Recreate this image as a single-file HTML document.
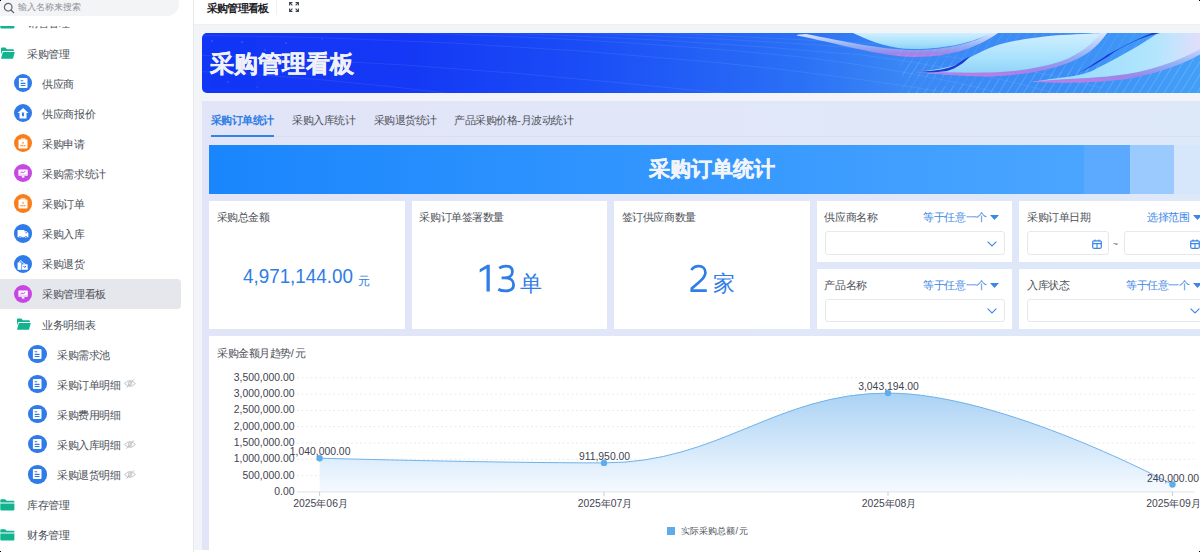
<!DOCTYPE html>
<html><head><meta charset="utf-8">
<style>
*{box-sizing:border-box;margin:0;padding:0}
html,body{width:1200px;height:552px;overflow:hidden;background:#fff;font-family:"Liberation Sans",sans-serif;}
.a{position:absolute;white-space:nowrap}
.it{position:absolute;left:0;width:181px;height:30px;font-size:11px;letter-spacing:-0.45px;color:#4b5058;white-space:nowrap}
.it .t{position:absolute;top:8.7px;line-height:14px}
.ic{position:absolute;width:18.2px;height:18.2px;border-radius:50%;top:5.9px}
.ic svg{position:absolute;left:0;top:0}
.fold{position:absolute;left:0;top:9px}
.card{position:absolute;background:#fff}
.ctl{position:absolute;left:7.8px;top:9px;font-size:11px;letter-spacing:-0.45px;line-height:14px;color:#4e5259}
.inp{position:absolute;border:1px solid #e6e8ec;border-radius:3px;background:#fff}
.lnk{position:absolute;font-size:11px;letter-spacing:-0.45px;text-align:right;line-height:14px;color:#3b86e6}
</style></head><body>

<div class="a" style="left:0;top:0;width:194px;height:552px;background:#fff;overflow:hidden">
<div class="a" style="left:-20px;top:-8px;width:198.6px;height:23.8px;border-radius:12px;background:#f3f4f6"></div>
<svg class="a" style="left:3px;top:1.5px" width="12" height="12" viewBox="0 0 12 12"><circle cx="5.2" cy="5.2" r="3.8" fill="none" stroke="#5c6068" stroke-width="1.2"/><path d="M8 8 L10.6 10.6" stroke="#5c6068" stroke-width="1.3" stroke-linecap="round"/></svg>
<div class="a" style="left:18px;top:0px;font-size:9.4px;line-height:13px;color:#8d9198">输入名称来搜索</div>
<div class="a" style="left:0;top:25.5px;width:194px;height:527px;overflow:hidden">
<div class="a" style="left:0;top:-25.5px;width:194px;height:600px">
<div class="it" style="top:7.8px;">
<svg class="fold" style="left:0px" width="15" height="12" viewBox="0 0 15 12"><path d="M0.3 1.3 Q0.3 0.3 1.3 0.3 L5.2 0.3 L6.6 1.7 L13.4 1.7 Q14.4 1.7 14.4 2.7 L14.4 3.6 L0.3 3.6 Z" fill="#12b48f"/><path d="M0.3 4.5 L14.4 4.5 L14.4 10.6 Q14.4 11.6 13.4 11.6 L1.3 11.6 Q0.3 11.6 0.3 10.6 Z" fill="#12b48f"/></svg>
<div class="t" style="left:27.0px">销售管理</div>
</div>
<div class="it" style="top:37.9px;">
<svg class="fold" style="left:0.0px" width="15" height="12" viewBox="0 0 15 12"><path d="M1 1.6 Q1 0.6 2 0.6 L5.4 0.6 L6.8 2.2 L12.9 2.2 Q13.9 2.2 13.9 3.2 L13.9 4.1 L2.9 4.1 Q2.3 4.1 2 4.8 L1 7.6 Z" fill="#12b48f"/><path d="M2.9 5 L14.8 5 L13.1 11.3 Q12.9 11.8 12.3 11.8 L1.6 11.8 Q1 11.8 1.1 11.2 Z" fill="#12b48f"/></svg>
<div class="t" style="left:27.0px">采购管理</div>
</div>
<div class="it" style="top:68.0px;">
<div class="ic" style="left:13.5px;background:#2f7ce8"><svg width="18" height="18" viewBox="0 0 18 18"><rect x="4.9" y="4.1" width="8.6" height="9.9" rx="0.9" fill="#fff"/><rect x="6.6" y="6" width="2.6" height="1.3" fill="#2f7ce8" opacity=".75"/><rect x="6.6" y="8.8" width="5" height="1.1" rx=".5" fill="#2f7ce8"/><rect x="6.6" y="11" width="5" height="1.1" rx=".5" fill="#2f7ce8"/></svg></div>
<div class="t" style="left:42.4px">供应商</div>
</div>
<div class="it" style="top:98.1px;">
<div class="ic" style="left:13.5px;background:#2f7ce8"><svg width="18" height="18" viewBox="0 0 18 18"><path d="M9.2 4 L14.4 8.9 L12.5 8.9 L12.5 14.6 L5.5 14.6 L5.5 8.9 L3.6 8.9 Z" fill="#fff"/><ellipse cx="9" cy="10.6" rx="1.1" ry="2" fill="#2f7ce8"/><path d="M7.9 8.2 L8.6 9 M10.1 8.2 L9.4 9" stroke="#2f7ce8" stroke-width=".6"/></svg></div>
<div class="t" style="left:42.4px">供应商报价</div>
</div>
<div class="it" style="top:128.2px;">
<div class="ic" style="left:13.5px;background:#fa7d19"><svg width="18" height="18" viewBox="0 0 18 18"><rect x="4.5" y="5.4" width="9" height="9" rx="0.6" fill="#fff"/><path d="M7 4.2 L11.2 4.2 L11.6 5.8 L6.6 5.8Z" fill="#fff" opacity=".85"/><path d="M9 7.2 L10.2 9.6 L7.8 9.6Z" fill="#fa7d19" opacity=".8"/><circle cx="7" cy="11.8" r=".75" fill="#fa7d19"/><circle cx="8.9" cy="11.8" r=".75" fill="#fa7d19"/><circle cx="10.8" cy="11.8" r=".75" fill="#fa7d19"/></svg></div>
<div class="t" style="left:42.4px">采购申请</div>
</div>
<div class="it" style="top:158.4px;">
<div class="ic" style="left:13.5px;background:#c647e3"><svg width="18" height="18" viewBox="0 0 18 18"><rect x="4.4" y="5.6" width="9.4" height="6.2" rx="0.4" fill="#fff"/><rect x="7.8" y="11.8" width="2.6" height="1.8" fill="#fff"/><path d="M6.4 9.2 L8 7.9 L9.3 8.7 L11.4 7.2" stroke="#c647e3" stroke-width="1" fill="none"/><rect x="4.4" y="10.6" width="9.4" height=".5" fill="#c647e3" opacity=".5"/></svg></div>
<div class="t" style="left:42.4px">采购需求统计</div>
</div>
<div class="it" style="top:188.5px;">
<div class="ic" style="left:13.5px;background:#fa7d19"><svg width="18" height="18" viewBox="0 0 18 18"><rect x="4.5" y="5.4" width="9" height="9" rx="0.6" fill="#fff"/><path d="M7 4.2 L11.2 4.2 L11.6 5.8 L6.6 5.8Z" fill="#fff" opacity=".85"/><path d="M9 7.2 L10.2 9.6 L7.8 9.6Z" fill="#fa7d19" opacity=".8"/><circle cx="7" cy="11.8" r=".75" fill="#fa7d19"/><circle cx="8.9" cy="11.8" r=".75" fill="#fa7d19"/><circle cx="10.8" cy="11.8" r=".75" fill="#fa7d19"/></svg></div>
<div class="t" style="left:42.4px">采购订单</div>
</div>
<div class="it" style="top:218.6px;">
<div class="ic" style="left:13.5px;background:#2f7ce8"><svg width="18" height="18" viewBox="0 0 18 18"><path d="M3.6 6.4 Q3.6 6.1 3.9 6.1 L10.4 6.1 L10.4 7.3 L12.6 7.3 L14.4 9.2 L14.4 13.2 L3.6 13.2Z" fill="#fff"/><circle cx="6.2" cy="13.2" r="1.2" fill="#2f7ce8"/><circle cx="11.8" cy="13.2" r="1.2" fill="#2f7ce8"/><circle cx="6.2" cy="13.2" r=".6" fill="#fff"/><circle cx="11.8" cy="13.2" r=".6" fill="#fff"/><circle cx="12.1" cy="8.7" r=".7" fill="#2f7ce8"/></svg></div>
<div class="t" style="left:42.4px">采购入库</div>
</div>
<div class="it" style="top:248.7px;">
<div class="ic" style="left:13.5px;background:#2f7ce8"><svg width="18" height="18" viewBox="0 0 18 18"><path d="M3.6 7.4 L5.2 7.4 L7.4 7.4 L7.4 14.8 L3.6 14.8Z" fill="#fff"/><path d="M5.4 7.4 Q5.6 5.6 6.6 5.6 Q7.8 5.8 8.4 7.6 L11.6 9.4" stroke="#fff" stroke-width=".9" fill="none"/><path d="M8.2 9.2 L13.6 9.2 L13.8 14.8 L8 14.8Z" fill="#fff"/><path d="M9.6 11 L10.7 12.6 L11.8 11" stroke="#2f7ce8" stroke-width="1" fill="none"/></svg></div>
<div class="t" style="left:42.4px">采购退货</div>
</div>
<div class="it" style="top:278.8px;background:#e6e7ec;border-radius:0 4px 4px 0">
<div class="ic" style="left:13.5px;background:#c647e3"><svg width="18" height="18" viewBox="0 0 18 18"><rect x="4.4" y="5.6" width="9.4" height="6.2" rx="0.4" fill="#fff"/><rect x="7.8" y="11.8" width="2.6" height="1.8" fill="#fff"/><path d="M6.4 9.2 L8 7.9 L9.3 8.7 L11.4 7.2" stroke="#c647e3" stroke-width="1" fill="none"/><rect x="4.4" y="10.6" width="9.4" height=".5" fill="#c647e3" opacity=".5"/></svg></div>
<div class="t" style="left:42.4px">采购管理看板</div>
</div>
<div class="it" style="top:309.0px;">
<svg class="fold" style="left:15.5px" width="15" height="12" viewBox="0 0 15 12"><path d="M1 1.6 Q1 0.6 2 0.6 L5.4 0.6 L6.8 2.2 L12.9 2.2 Q13.9 2.2 13.9 3.2 L13.9 4.1 L2.9 4.1 Q2.3 4.1 2 4.8 L1 7.6 Z" fill="#12b48f"/><path d="M2.9 5 L14.8 5 L13.1 11.3 Q12.9 11.8 12.3 11.8 L1.6 11.8 Q1 11.8 1.1 11.2 Z" fill="#12b48f"/></svg>
<div class="t" style="left:42.4px">业务明细表</div>
</div>
<div class="it" style="top:339.1px;">
<div class="ic" style="left:28.4px;background:#2f7ce8"><svg width="18" height="18" viewBox="0 0 18 18"><rect x="4.9" y="4.1" width="8.6" height="9.9" rx="0.9" fill="#fff"/><rect x="6.6" y="6" width="2.6" height="1.3" fill="#2f7ce8" opacity=".75"/><rect x="6.6" y="8.8" width="5" height="1.1" rx=".5" fill="#2f7ce8"/><rect x="6.6" y="11" width="5" height="1.1" rx=".5" fill="#2f7ce8"/></svg></div>
<div class="t" style="left:57.2px">采购需求池</div>
</div>
<div class="it" style="top:369.2px;">
<div class="ic" style="left:28.4px;background:#2f7ce8"><svg width="18" height="18" viewBox="0 0 18 18"><rect x="4.9" y="4.1" width="8.6" height="9.9" rx="0.9" fill="#fff"/><rect x="6.6" y="6" width="2.6" height="1.3" fill="#2f7ce8" opacity=".75"/><rect x="6.6" y="8.8" width="5" height="1.1" rx=".5" fill="#2f7ce8"/><rect x="6.6" y="11" width="5" height="1.1" rx=".5" fill="#2f7ce8"/></svg></div>
<div class="t" style="left:57.2px">采购订单明细</div>
<svg class="a" style="left:123.5px;top:10.2px" width="12" height="9" viewBox="0 0 12 9"><path d="M0.6 4.5 Q6 -1.2 11.4 4.5 Q6 10.2 0.6 4.5Z" fill="none" stroke="#b7bac1" stroke-width=".95"/><circle cx="6" cy="4.5" r="1.7" fill="none" stroke="#b7bac1" stroke-width=".95"/><path d="M2.6 8.6 L9.8 0.4" stroke="#b7bac1" stroke-width=".95"/></svg>
</div>
<div class="it" style="top:399.3px;">
<div class="ic" style="left:28.4px;background:#2f7ce8"><svg width="18" height="18" viewBox="0 0 18 18"><rect x="4.9" y="4.1" width="8.6" height="9.9" rx="0.9" fill="#fff"/><rect x="6.6" y="6" width="2.6" height="1.3" fill="#2f7ce8" opacity=".75"/><rect x="6.6" y="8.8" width="5" height="1.1" rx=".5" fill="#2f7ce8"/><rect x="6.6" y="11" width="5" height="1.1" rx=".5" fill="#2f7ce8"/></svg></div>
<div class="t" style="left:57.2px">采购费用明细</div>
</div>
<div class="it" style="top:429.4px;">
<div class="ic" style="left:28.4px;background:#2f7ce8"><svg width="18" height="18" viewBox="0 0 18 18"><rect x="4.9" y="4.1" width="8.6" height="9.9" rx="0.9" fill="#fff"/><rect x="6.6" y="6" width="2.6" height="1.3" fill="#2f7ce8" opacity=".75"/><rect x="6.6" y="8.8" width="5" height="1.1" rx=".5" fill="#2f7ce8"/><rect x="6.6" y="11" width="5" height="1.1" rx=".5" fill="#2f7ce8"/></svg></div>
<div class="t" style="left:57.2px">采购入库明细</div>
<svg class="a" style="left:123.5px;top:10.2px" width="12" height="9" viewBox="0 0 12 9"><path d="M0.6 4.5 Q6 -1.2 11.4 4.5 Q6 10.2 0.6 4.5Z" fill="none" stroke="#b7bac1" stroke-width=".95"/><circle cx="6" cy="4.5" r="1.7" fill="none" stroke="#b7bac1" stroke-width=".95"/><path d="M2.6 8.6 L9.8 0.4" stroke="#b7bac1" stroke-width=".95"/></svg>
</div>
<div class="it" style="top:459.6px;">
<div class="ic" style="left:28.4px;background:#2f7ce8"><svg width="18" height="18" viewBox="0 0 18 18"><rect x="4.9" y="4.1" width="8.6" height="9.9" rx="0.9" fill="#fff"/><rect x="6.6" y="6" width="2.6" height="1.3" fill="#2f7ce8" opacity=".75"/><rect x="6.6" y="8.8" width="5" height="1.1" rx=".5" fill="#2f7ce8"/><rect x="6.6" y="11" width="5" height="1.1" rx=".5" fill="#2f7ce8"/></svg></div>
<div class="t" style="left:57.2px">采购退货明细</div>
<svg class="a" style="left:123.5px;top:10.2px" width="12" height="9" viewBox="0 0 12 9"><path d="M0.6 4.5 Q6 -1.2 11.4 4.5 Q6 10.2 0.6 4.5Z" fill="none" stroke="#b7bac1" stroke-width=".95"/><circle cx="6" cy="4.5" r="1.7" fill="none" stroke="#b7bac1" stroke-width=".95"/><path d="M2.6 8.6 L9.8 0.4" stroke="#b7bac1" stroke-width=".95"/></svg>
</div>
<div class="it" style="top:489.7px;">
<svg class="fold" style="left:0px" width="15" height="12" viewBox="0 0 15 12"><path d="M0.3 1.3 Q0.3 0.3 1.3 0.3 L5.2 0.3 L6.6 1.7 L13.4 1.7 Q14.4 1.7 14.4 2.7 L14.4 3.6 L0.3 3.6 Z" fill="#12b48f"/><path d="M0.3 4.5 L14.4 4.5 L14.4 10.6 Q14.4 11.6 13.4 11.6 L1.3 11.6 Q0.3 11.6 0.3 10.6 Z" fill="#12b48f"/></svg>
<div class="t" style="left:27.0px">库存管理</div>
</div>
<div class="it" style="top:519.8px;">
<svg class="fold" style="left:0px" width="15" height="12" viewBox="0 0 15 12"><path d="M0.3 1.3 Q0.3 0.3 1.3 0.3 L5.2 0.3 L6.6 1.7 L13.4 1.7 Q14.4 1.7 14.4 2.7 L14.4 3.6 L0.3 3.6 Z" fill="#12b48f"/><path d="M0.3 4.5 L14.4 4.5 L14.4 10.6 Q14.4 11.6 13.4 11.6 L1.3 11.6 Q0.3 11.6 0.3 10.6 Z" fill="#12b48f"/></svg>
<div class="t" style="left:27.0px">财务管理</div>
</div>
</div></div>
<div class="a" style="left:193px;top:0;width:1px;height:552px;background:#e8e9ee"></div>
</div>
<div class="a" style="left:194px;top:0;width:1006px;height:552px;background:#f3f4f7;overflow:hidden">
<div class="a" style="left:0;top:0;width:1006px;height:25px;background:#fff;border-bottom:1px solid #eef0f3"></div>
<div class="a" style="left:12.8px;top:1px;font-size:11px;letter-spacing:-0.7px;line-height:14px;font-weight:bold;color:#1f2329">采购管理看板</div>
<div class="a" style="left:81.5px;top:0;width:1px;height:14.5px;background:#f0f1f4"></div>
<svg class="a" style="left:95px;top:2px" width="10" height="10" viewBox="0 0 10 10" fill="none" stroke="#3d4250" stroke-width="1.1"><path d="M0.6 3.4 L0.6 0.6 L3.4 0.6 M0.8 0.8 L3.4 3.4"/><path d="M6.6 0.6 L9.4 0.6 L9.4 3.4 M9.2 0.8 L6.6 3.4"/><path d="M0.6 6.6 L0.6 9.4 L3.4 9.4 M0.8 9.2 L3.4 6.6"/><path d="M9.4 6.6 L9.4 9.4 L6.6 9.4 M9.2 9.2 L6.6 6.6"/></svg>
</div>
<div class="a" style="left:0;top:0;width:1200px;height:552px;pointer-events:none">
<div class="a" style="left:202px;top:33px;width:1010px;height:60px;border-radius:5px;overflow:hidden;background:linear-gradient(90deg,#1236f5 0%,#1438f5 20%,#1a4cf6 37%,#2a70f6 59%,#3a88f5 70%,#3c8ef6 85%,#44a0f8 100%)">
<svg class="a" style="left:0;top:0" width="1010" height="60" viewBox="0 0 1010 60">
<defs>
<linearGradient id="lf" x1="0" y1="0" x2="0" y2="1"><stop offset="0" stop-color="#d2effe"/><stop offset=".65" stop-color="#a4e0fc"/><stop offset="1" stop-color="#8fd0f8"/></linearGradient>
<linearGradient id="lf3" x1="0" y1="0" x2="1" y2="0"><stop offset="0" stop-color="#8fd8fb"/><stop offset=".7" stop-color="#b4e6fd"/><stop offset="1" stop-color="#efdcfb"/></linearGradient>
<linearGradient id="rim" x1="0" y1="0" x2="0" y2="1"><stop offset="0" stop-color="#dce8ff"/><stop offset=".55" stop-color="#92aef4"/><stop offset=".85" stop-color="#9a86ea"/><stop offset="1" stop-color="#c07ce6"/></linearGradient>
<pattern id="grid" width="7" height="7" patternUnits="userSpaceOnUse" patternTransform="rotate(32)"><line x1="0" y1="0" x2="0" y2="7" stroke="#9fe6ff" stroke-width=".7" stroke-opacity=".45"/></pattern>
</defs>
<g stroke="#ffffff" stroke-opacity=".10" fill="none" stroke-width=".8">
<path d="M-20 2 Q250 4 520 30 Q640 42 760 62"/><path d="M120 -2 Q380 2 600 24 Q700 36 800 60"/><path d="M240 -2 Q460 4 660 22 Q760 34 860 62"/><path d="M330 -2 Q520 4 700 18 Q800 28 900 55"/>
<path d="M-10 22 Q200 28 420 50 Q500 58 560 64"/><path d="M-10 38 Q120 44 260 62"/><path d="M420 -2 Q600 6 760 16"/>
</g>
<g fill="#5d8cff" opacity=".7"><circle cx="10" cy="8" r=".8"/><circle cx="40" cy="9" r=".8"/><circle cx="84" cy="10" r=".7"/><circle cx="63" cy="17" r=".7"/><circle cx="26" cy="49" r=".7"/><circle cx="55" cy="54" r=".6"/><circle cx="120" cy="6" r=".6"/></g>
<path d="M690 60 L1010 20 L1010 60Z" fill="url(#grid)"/>
<path d="M700 30 Q850 28 1010 40 L1010 60 L700 60Z" fill="url(#grid)" opacity=".6"/>
<!-- leaf 1 -->
<path d="M651 0 C672 10 690 16 712 16 C745 16 772 9 790 0Z" fill="url(#lf)"/>
<path d="M594.5 2.5 C630 9 680 24 712 24 C752 24 778 13 796 0 L789 0 C772 10 745 17 712 17 C682 17 640 8 604 1 Q596 1 594.5 2.5Z" fill="url(#rim)"/>
<!-- leaf 2 -->
<path d="M690 0 L1010 0 L1010 40 L700 45Z" fill="url(#grid)" opacity=".7"/>
<path d="M713 39 C735 37 750 34 757.5 30.3 C775 20 790 13 803 10 C825 5 845 3 860 2 C880 1 895 0 904.5 0 C895 15 880 25 860 31 C835 39 805 42 788 42 C760 43 735 41 713 39Z" fill="url(#lf)"/>
<path d="M713 39 C740 41 765 44 790 43.4 C820 42 845 38 866 30 C888 22 898 10 905 0 L899 0 C891 10 878 21 860 28 C835 36 810 39 788 39.5 C760 40 735 39 713 39Z" fill="url(#rim)"/>
<path d="M713 39 C735 38 748 36 756 30.5 C761 27 764 25 768 23.5 C762 30 755 35 745 38 C735 39.5 725 39.5 713 39Z" fill="#1b3ad2"/>
<!-- leaf 3 -->
<path d="M830 48.7 C860 50 890 48 911 46 C950 40 985 25 1010 10 L1010 0 L956 0 C930 18 905 30 890 38 C880 42 872 43 868.5 43.4 C855 45 842 47 830 48.7Z" fill="url(#lf3)"/>
<path d="M830 48.7 C870 51 900 49 925 46 C960 40 990 28 1010 14 L1010 9 C988 23 958 36 925 41 C900 45 870 45.5 850 47 C842 47.5 836 48 830 48.7Z" fill="url(#rim)"/>
<path d="M868.5 43.4 C882 38 897 30 911 20 C928 9 944 3 958 0 L950 0 C935 6 920 14 905 22 C890 32 878 40 868.5 43.4Z" fill="#1b3ad2"/>
</svg>
<div class="a" style="left:7.5px;top:16.3px;font-size:24px;line-height:30px;font-weight:bold;color:#f0f1f7;-webkit-text-stroke:0.25px #f0f1f7">采购管理看板</div>
</div>
<div class="a" style="left:202px;top:101px;width:1010px;height:449px;background:linear-gradient(90deg,#e2e4f8 0%,#e1e7f8 50%,#dde8f8 100%)"></div>
<div class="a" style="left:210.7px;top:112.5px;font-size:11px;letter-spacing:-0.45px;line-height:14px;color:#2f7ee4;font-weight:bold">采购订单统计</div>
<div class="a" style="left:292.0px;top:112.5px;font-size:11px;letter-spacing:-0.45px;line-height:14px;color:#4e5259;">采购入库统计</div>
<div class="a" style="left:373.5px;top:112.5px;font-size:11px;letter-spacing:-0.45px;line-height:14px;color:#4e5259;">采购退货统计</div>
<div class="a" style="left:454.0px;top:112.5px;font-size:11px;letter-spacing:-0.45px;line-height:14px;color:#4e5259;">产品采购价格-月波动统计</div>
<div class="a" style="left:209px;top:136px;width:1003px;height:1px;background:#dadfea"></div>
<div class="a" style="left:210.7px;top:135px;width:63px;height:2.2px;background:#3484e8"></div>
<div class="a" style="left:209px;top:144.5px;width:875px;height:49px;background:linear-gradient(90deg,#1a86fd,#4aa5ff)"></div>
<div class="a" style="left:1084px;top:144.5px;width:46px;height:49px;background:#5caaff"></div>
<div class="a" style="left:1130px;top:144.5px;width:44px;height:49px;background:#9acafe"></div>
<div class="a" style="left:1174px;top:144.5px;width:40px;height:49px;background:#d6e6fb"></div>
<div class="a" style="left:648.5px;top:155.5px;font-size:21px;line-height:26px;font-weight:bold;color:#f1f4fa;-webkit-text-stroke:0.35px #f1f4fa">采购订单统计</div>
<div class="card" style="left:209.0px;top:201px;width:195.5px;height:128px"><div class="ctl">采购总金额</div></div>
<div class="card" style="left:411.7px;top:201px;width:195.5px;height:128px"><div class="ctl">采购订单签署数量</div></div>
<div class="card" style="left:614.0px;top:201px;width:195.5px;height:128px"><div class="ctl">签订供应商数量</div></div>
<div class="a" style="left:242.8px;top:264.3px;font-size:20.8px;line-height:24px;color:#2f7de6;transform:scaleX(0.905);transform-origin:0 0">4,971,144.00</div>
<div class="a" style="left:357.5px;top:272.8px;font-size:12px;line-height:16px;color:#2f7de6">元</div>
<svg class="a" style="left:0;top:0" width="1200" height="552" viewBox="0 0 1200 552"><path d="M486.5 291.5 L489.8 291.5 L489.8 264.8 L487.3 264.8 L479.7 269.3 L479.7 272.4 L486.5 268.5 Z" fill="#2f7de6"/><path d="M499.2 268.2 C501.2 266.8 503.6 266.1 506 266.1 C510.4 266.1 512.4 268.6 512.4 271.7 C512.4 275.6 509.4 277.9 505 277.9 L501.6 277.9 M505 277.9 C510.6 277.9 513.6 280.7 513.6 284.8 C513.6 288.9 510.2 290.9 505.3 290.9 C502.5 290.9 500.1 290.3 498.3 289.2" fill="none" stroke="#2f7de6" stroke-width="2.8"/><path d="M691.3 270 C693.2 267.4 695.8 266.2 698.6 266.2 C702.9 266.2 705.4 268.8 705.4 272.6 C705.4 276.6 702.8 279.2 699 282.2 L691.8 288.4 L691.8 290.6 L706.8 290.6" fill="none" stroke="#2f7de6" stroke-width="2.7"/></svg>
<div class="a" style="left:520px;top:271px;font-size:21.5px;line-height:26px;color:#2f7de6">单</div>
<div class="a" style="left:713px;top:271px;font-size:21.5px;line-height:26px;color:#2f7de6">家</div>
<div class="card" style="left:816.7px;top:201.0px;width:195.5px;height:60.5px"><div class="ctl">供应商名称</div></div>
<div class="lnk" style="left:886.7px;top:210.0px;width:100px">等于任意一个</div>
<svg class="a" style="left:990.2px;top:215.3px" width="9" height="5" viewBox="0 0 9 5"><path d="M0 0 L9 0 L4.5 5Z" fill="#3b86e6"/></svg>
<div class="inp" style="left:824.5px;top:231.0px;width:180.5px;height:23.5px"></div>
<svg class="a" style="left:987.2px;top:240.5px" width="10" height="6" viewBox="0 0 10 6"><path d="M0.6 0.6 L5 5 L9.4 0.6" fill="none" stroke="#3b86e6" stroke-width="1.1"/></svg>
<div class="card" style="left:816.7px;top:268.5px;width:195.5px;height:60.5px"><div class="ctl">产品名称</div></div>
<div class="lnk" style="left:886.7px;top:277.5px;width:100px">等于任意一个</div>
<svg class="a" style="left:990.2px;top:282.8px" width="9" height="5" viewBox="0 0 9 5"><path d="M0 0 L9 0 L4.5 5Z" fill="#3b86e6"/></svg>
<div class="inp" style="left:824.5px;top:298.5px;width:180.5px;height:23.5px"></div>
<svg class="a" style="left:987.2px;top:308.0px" width="10" height="6" viewBox="0 0 10 6"><path d="M0.6 0.6 L5 5 L9.4 0.6" fill="none" stroke="#3b86e6" stroke-width="1.1"/></svg>
<div class="card" style="left:1019.3px;top:201.0px;width:195.5px;height:60.5px"><div class="ctl">采购订单日期</div></div>
<div class="lnk" style="left:1089.3px;top:210.0px;width:100px">选择范围</div>
<svg class="a" style="left:1192.8px;top:215.3px" width="9" height="5" viewBox="0 0 9 5"><path d="M0 0 L9 0 L4.5 5Z" fill="#3b86e6"/></svg>
<div class="inp" style="left:1027.1px;top:231.0px;width:81.7px;height:23.5px"></div>
<svg class="a" style="left:1092.1px;top:239.0px" width="10" height="10" viewBox="0 0 10 10"><rect x="0.7" y="1.8" width="8.6" height="7.5" rx="1.2" fill="none" stroke="#3b86e6" stroke-width="1.2"/><path d="M0.7 4.6 L9.3 4.6 M5 4.6 L5 9.3 M3 0.4 L3 2.6 M7 0.4 L7 2.6" stroke="#3b86e6" stroke-width="1.1"/></svg>
<div class="a" style="left:1112.8px;top:238.0px;font-size:9px;line-height:12px;color:#666">~</div>
<div class="inp" style="left:1124.4px;top:231.0px;width:81.7px;height:23.5px"></div>
<svg class="a" style="left:1189.9px;top:239.0px" width="10" height="10" viewBox="0 0 10 10"><rect x="0.7" y="1.8" width="8.6" height="7.5" rx="1.2" fill="none" stroke="#3b86e6" stroke-width="1.2"/><path d="M0.7 4.6 L9.3 4.6 M5 4.6 L5 9.3 M3 0.4 L3 2.6 M7 0.4 L7 2.6" stroke="#3b86e6" stroke-width="1.1"/></svg>
<div class="card" style="left:1019.3px;top:268.5px;width:195.5px;height:60.5px"><div class="ctl">入库状态</div></div>
<div class="lnk" style="left:1089.3px;top:277.5px;width:100px">等于任意一个</div>
<svg class="a" style="left:1192.8px;top:282.8px" width="9" height="5" viewBox="0 0 9 5"><path d="M0 0 L9 0 L4.5 5Z" fill="#3b86e6"/></svg>
<div class="inp" style="left:1027.1px;top:298.5px;width:180.5px;height:23.5px"></div>
<svg class="a" style="left:1189.8px;top:308.0px" width="10" height="6" viewBox="0 0 10 6"><path d="M0.6 0.6 L5 5 L9.4 0.6" fill="none" stroke="#3b86e6" stroke-width="1.1"/></svg>
<div class="card" style="left:209px;top:336.2px;width:1003px;height:213.8px"></div>
<div class="a" style="left:217px;top:345.5px;font-size:11px;letter-spacing:-0.45px;line-height:14px;color:#4e5259">采购金额月趋势<span style="letter-spacing:0.6px">/</span>元</div>
<svg class="a" style="left:0;top:0" width="1200" height="552" viewBox="0 0 1200 552">
<defs><linearGradient id="ar" x1="0" y1="0" x2="0" y2="1"><stop offset="0" stop-color="#aad2f4"/><stop offset="1" stop-color="#f6faff"/></linearGradient></defs>
<line x1="297" y1="475.6" x2="1194.6" y2="475.6" stroke="#e8eaee" stroke-width="1" stroke-dasharray="2 2.5"/>
<line x1="297" y1="459.3" x2="1194.6" y2="459.3" stroke="#e8eaee" stroke-width="1" stroke-dasharray="2 2.5"/>
<line x1="297" y1="443.0" x2="1194.6" y2="443.0" stroke="#e8eaee" stroke-width="1" stroke-dasharray="2 2.5"/>
<line x1="297" y1="426.7" x2="1194.6" y2="426.7" stroke="#e8eaee" stroke-width="1" stroke-dasharray="2 2.5"/>
<line x1="297" y1="410.4" x2="1194.6" y2="410.4" stroke="#e8eaee" stroke-width="1" stroke-dasharray="2 2.5"/>
<line x1="297" y1="394.1" x2="1194.6" y2="394.1" stroke="#e8eaee" stroke-width="1" stroke-dasharray="2 2.5"/>
<line x1="297" y1="377.8" x2="1194.6" y2="377.8" stroke="#e8eaee" stroke-width="1" stroke-dasharray="2 2.5"/>
<path d="M319.6 458.2 C319.6 458.2 491.9 462.9 604.0 462.9 C719.3 462.9 775.5 393.1 888.0 393.1 C1002.9 393.1 1172.5 484.5 1172.5 484.5 L1172.5 491.9 L319.6 491.9 Z" fill="url(#ar)"/>
<line x1="297" y1="491.9" x2="1194.6" y2="491.9" stroke="#dfe2e7" stroke-width="1"/>
<line x1="319.6" y1="491.9" x2="319.6" y2="495.9" stroke="#c9ccd3" stroke-width="1"/>
<line x1="604.0" y1="491.9" x2="604.0" y2="495.9" stroke="#c9ccd3" stroke-width="1"/>
<line x1="888.0" y1="491.9" x2="888.0" y2="495.9" stroke="#c9ccd3" stroke-width="1"/>
<line x1="1172.5" y1="491.9" x2="1172.5" y2="495.9" stroke="#c9ccd3" stroke-width="1"/>
<path d="M319.6 458.2 C319.6 458.2 491.9 462.9 604.0 462.9 C719.3 462.9 775.5 393.1 888.0 393.1 C1002.9 393.1 1172.5 484.5 1172.5 484.5" fill="none" stroke="#6fb3ea" stroke-width="1"/>
<circle cx="319.6" cy="458.2" r="3.2" fill="#5eaceb"/>
<circle cx="604.0" cy="462.9" r="3.2" fill="#5eaceb"/>
<circle cx="888.0" cy="393.1" r="3.2" fill="#5eaceb"/>
<circle cx="1172.5" cy="484.5" r="3.2" fill="#5eaceb"/>
</svg>
<div class="a" style="right:905.5px;top:371.8px;font-size:10.4px;line-height:12px;color:#3f4450;text-align:right">3,500,000.00</div>
<div class="a" style="right:905.5px;top:388.1px;font-size:10.4px;line-height:12px;color:#3f4450;text-align:right">3,000,000.00</div>
<div class="a" style="right:905.5px;top:404.4px;font-size:10.4px;line-height:12px;color:#3f4450;text-align:right">2,500,000.00</div>
<div class="a" style="right:905.5px;top:420.7px;font-size:10.4px;line-height:12px;color:#3f4450;text-align:right">2,000,000.00</div>
<div class="a" style="right:905.5px;top:437.0px;font-size:10.4px;line-height:12px;color:#3f4450;text-align:right">1,500,000.00</div>
<div class="a" style="right:905.5px;top:453.3px;font-size:10.4px;line-height:12px;color:#3f4450;text-align:right">1,000,000.00</div>
<div class="a" style="right:905.5px;top:469.6px;font-size:10.4px;line-height:12px;color:#3f4450;text-align:right">500,000.00</div>
<div class="a" style="right:905.5px;top:485.9px;font-size:10.4px;line-height:12px;color:#3f4450;text-align:right">0.00</div>
<div class="a" style="left:320.1px;top:446.4px;width:120px;margin-left:-60px;text-align:center;font-size:10.4px;line-height:12px;color:#3f4450">1,040,000.00</div>
<div class="a" style="left:604.5px;top:451.1px;width:120px;margin-left:-60px;text-align:center;font-size:10.4px;line-height:12px;color:#3f4450">911,950.00</div>
<div class="a" style="left:888.5px;top:381.3px;width:120px;margin-left:-60px;text-align:center;font-size:10.4px;line-height:12px;color:#3f4450">3,043,194.00</div>
<div class="a" style="right:1.0px;top:472.7px;font-size:10.4px;line-height:12px;color:#3f4450">240,000.00</div>
<div class="a" style="left:320.6px;top:497.8px;width:120px;margin-left:-60px;text-align:center;font-size:10.4px;line-height:12px;color:#3f4450">2025年06月</div>
<div class="a" style="left:605.0px;top:497.8px;width:120px;margin-left:-60px;text-align:center;font-size:10.4px;line-height:12px;color:#3f4450">2025年07月</div>
<div class="a" style="left:889.0px;top:497.8px;width:120px;margin-left:-60px;text-align:center;font-size:10.4px;line-height:12px;color:#3f4450">2025年08月</div>
<div class="a" style="left:1173.5px;top:497.8px;width:120px;margin-left:-60px;text-align:center;font-size:10.4px;line-height:12px;color:#3f4450">2025年09月</div>
<div class="a" style="left:667px;top:527px;width:7.5px;height:7.5px;background:#5dade8"></div>
<div class="a" style="left:681px;top:524.5px;font-size:9px;letter-spacing:0.1px;line-height:13px;color:#4e5259">实际采购总额<span style="letter-spacing:0.8px">/</span>元</div>
</div>
<div class="a" style="left:194px;top:550px;width:1006px;height:2px;background:#fff"></div>
<div class="a" style="left:0;top:0;width:1px;height:1px;background:#000"></div><div class="a" style="left:1199px;top:551px;width:1px;height:1px;background:#000"></div><div class="a" style="left:1199px;top:0;width:1px;height:1px;background:#000"></div><div class="a" style="left:0;top:551px;width:1px;height:1px;background:#000"></div>
</body></html>
